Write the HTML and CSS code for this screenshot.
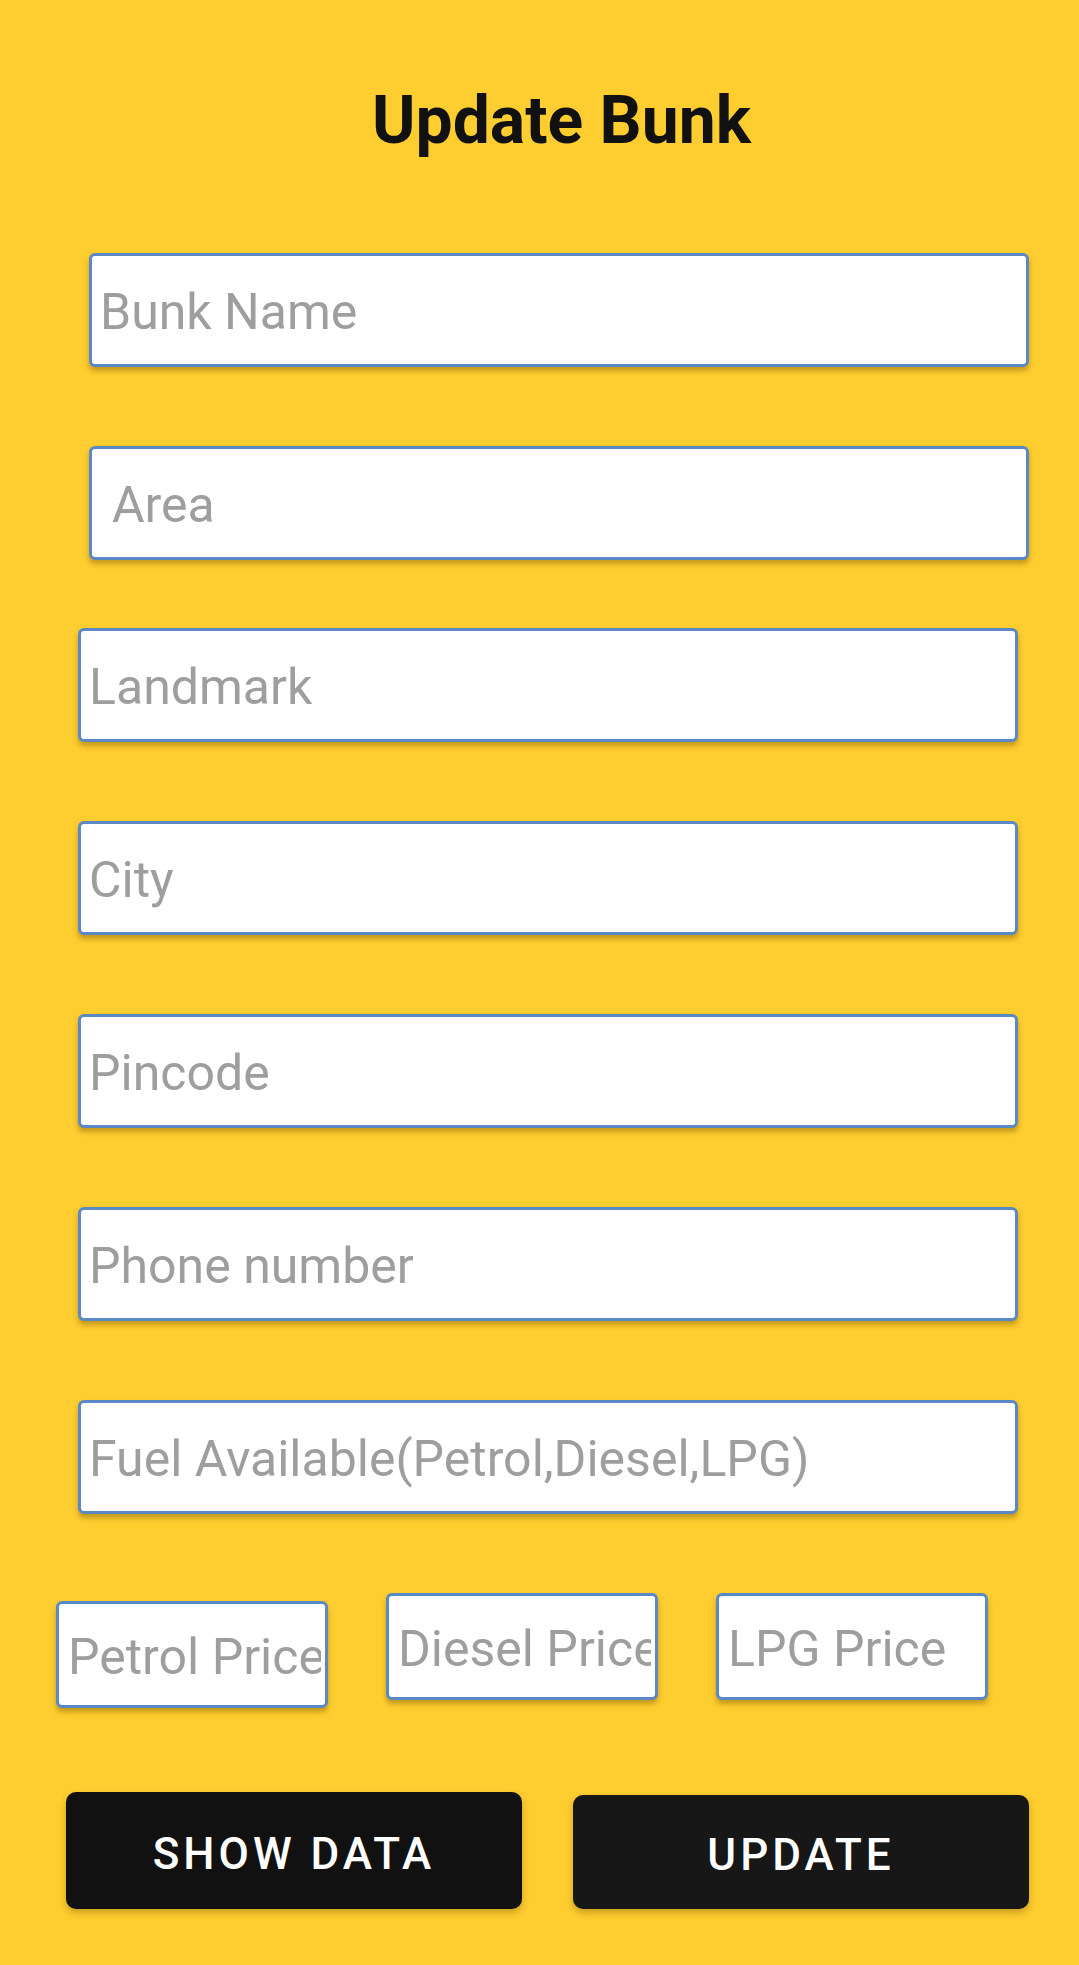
FILE: index.html
```html
<!DOCTYPE html>
<html lang="en">
<head>
<meta charset="utf-8">
<title>Update Bunk</title>
<link rel="stylesheet" href="styles.css">
</head>
<body>
<main class="screen">
  <h1 class="title">Update Bunk</h1>
  <form class="form">
    <input class="field field-wide field-indent pad-s" type="text" placeholder="Bunk Name">
    <input class="field field-wide field-indent pad-l gap-small-after" type="text" placeholder="Area">
    <input class="field field-wide field-base pad-s" type="text" placeholder="Landmark">
    <input class="field field-wide field-base pad-s" type="text" placeholder="City">
    <input class="field field-wide field-base pad-s" type="text" placeholder="Pincode">
    <input class="field field-wide field-base pad-s" type="text" placeholder="Phone number">
    <input class="field field-wide field-base pad-s" type="text" placeholder="Fuel Available(Petrol,Diesel,LPG)">
    <div class="price-row">
      <input class="field price price-low" type="text" placeholder="Petrol Price">
      <input class="field price" type="text" placeholder="Diesel Price">
      <input class="field price" type="text" placeholder="LPG Price">
    </div>
    <div class="button-row">
      <button class="btn btn-show" type="button">SHOW DATA</button>
      <button class="btn btn-update" type="button">UPDATE</button>
    </div>
  </form>
</main>
</body>
</html>
```

FILE: styles.css
```css
* {
  box-sizing: border-box;
}

html, body {
  margin: 0;
  padding: 0;
}

body {
  background: #fecd2f;
  font-family: Roboto, "Liberation Sans", sans-serif;
  width: 1079px;
  min-height: 1965px;
}

.screen {
  display: flex;
  flex-direction: column;
}

.title {
  margin: 0;
  padding: 84px 0 0 44px;
  text-align: center;
  font-size: 66px;
  font-weight: 700;
  line-height: 74px;
  color: #111111;
}

.form {
  display: flex;
  flex-direction: column;
  align-items: flex-start;
  padding-top: 95px;
}

.field {
  display: block;
  height: 114px;
  margin: 0 0 79px 0;
  background: #ffffff;
  border: 3px solid #5b89c6;
  border-radius: 6px;
  box-shadow: 0 4px 5px rgba(90, 60, 0, 0.35);
  font-family: Roboto, "Liberation Sans", sans-serif;
  font-size: 50px;
  color: #333333;
  padding-top: 4px;
  padding-bottom: 0;
  padding-right: 6px;
  outline: none;
}

.field::placeholder {
  color: #9e9e9e;
  opacity: 1;
}

.field-wide {
  width: 940px;
}

.field-indent {
  margin-left: 89px;
}

.field-base {
  margin-left: 78px;
}

.pad-s {
  padding-left: 8px;
}

.pad-l {
  padding-left: 20px;
}

.gap-small-after {
  margin-bottom: 68px;
}

.price-row {
  display: flex;
  align-items: flex-start;
  gap: 58px;
  padding-left: 56px;
}

.price {
  width: 272px;
  height: 107px;
  margin: 0;
  padding-left: 9px;
  padding-right: 4px;
}

.price-low {
  margin-top: 8px;
}

.button-row {
  display: flex;
  align-items: flex-end;
  gap: 51px;
  padding-left: 66px;
  margin-top: 84px;
}

.btn {
  border: none;
  border-radius: 10px;
  color: #ffffff;
  font-family: Roboto, "Liberation Sans", sans-serif;
  font-size: 44px;
  font-weight: 500;
  letter-spacing: 4px;
  box-shadow: 0 4px 7px rgba(90, 60, 0, 0.3);
  padding: 6px 0 0 0;
  cursor: pointer;
}

.btn-show {
  width: 456px;
  height: 117px;
  background: #111111;
}

.btn-update {
  width: 456px;
  height: 114px;
  background: #171717;
}
```
